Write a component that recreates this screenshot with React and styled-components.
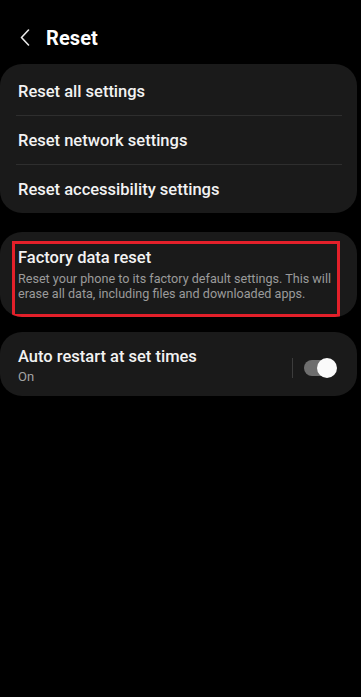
import React from "react";
import styled, { createGlobalStyle } from "styled-components";

const Global = createGlobalStyle`
  html, body { margin: 0; padding: 0; background: #000; }
  body { font-family: Roboto, "Noto Sans", "Liberation Sans", sans-serif; color: #fff; }
  * { box-sizing: border-box; }
`;

const Page = styled.div`
  width: 361px;
  min-height: 697px;
  background: #000;
  display: flex;
  flex-direction: column;
`;

const Header = styled.header`
  height: 64px;
  display: flex;
  align-items: center;
  padding: 12px 0 0 18px;
  gap: 14px;
`;

const Back = styled.button`
  background: none;
  border: none;
  padding: 0;
  width: 14px;
  height: 18px;
  display: flex;
  align-items: center;
  justify-content: center;
  margin-top: -1px;
`;

const Title = styled.h1`
  margin: 0;
  font-size: 20px;
  font-weight: 700;
  color: #fff;
  letter-spacing: 0.1px;
  margin-top: -1px;
`;

const Cards = styled.div`
  display: flex;
  flex-direction: column;
  padding-right: 4px;
`;

const Card = styled.section`
  background: #1a1a1a;
  border-radius: 22px;
  padding: ${(p) => p.$pad || "0"};
  margin-top: ${(p) => p.$mt || "0"};
  overflow: hidden;
`;

const Row = styled.div`
  height: 48px;
  display: flex;
  align-items: center;
  padding: 0 18px;
  font-size: 16.5px;
  font-weight: 500;
  color: #f2f2f2;
`;

const Divider = styled.div`
  height: 1px;
  background: #2e2e2e;
  margin: 0 15px 0 16px;
`;

const Highlight = styled.div`
  border: 3px solid #e3202a;
  padding: 4px 6px 13px 3px;
  margin-right: 17px;
`;

const ItemTitle = styled.div`
  font-size: 16.5px;
  font-weight: 500;
  line-height: 20px;
  color: #f2f2f2;
`;

const Sub = styled.div`
  font-size: 12.6px;
  line-height: 15px;
  color: #9b9b9b;
  margin-top: ${(p) => p.$mt || "0"};
`;

const SwitchRow = styled.div`
  display: flex;
  align-items: center;
  padding: 15px 21px 11px 18px;
`;

const SwitchText = styled.div`
  flex: 1;
  display: flex;
  flex-direction: column;
`;

const OnText = styled.div`
  font-size: 13px;
  line-height: 16px;
  color: #a3a3a3;
  margin-top: 2px;
`;

const VLine = styled.div`
  width: 1px;
  height: 20px;
  background: #3c3c3c;
  margin-right: 11px;
  margin-top: 4px;
`;

const Track = styled.div`
  position: relative;
  width: 32px;
  height: 16px;
  border-radius: 8px;
  background: #6e6e6e;
  margin-top: 4px;
`;

const Thumb = styled.div`
  position: absolute;
  right: -1px;
  top: -2px;
  width: 20px;
  height: 20px;
  border-radius: 50%;
  background: #fafafa;
`;

export default function App() {
  return (
    <>
      <Global />
      <Page>
        <Header>
          <Back aria-label="Back">
            <svg width="10" height="17" viewBox="0 0 10 17" fill="none">
              <path d="M8.5 1 L1.5 8.5 L8.5 16" stroke="#e8e8e8" strokeWidth="1.6" strokeLinecap="round" strokeLinejoin="round" />
            </svg>
          </Back>
          <Title>Reset</Title>
        </Header>
        <Cards>
          <Card $pad="3px 0 0 0">
            <Row>Reset all settings</Row>
            <Divider />
            <Row>Reset network settings</Row>
            <Divider />
            <Row>Reset accessibility settings</Row>
          </Card>
          <Card $pad="9px 0 0 12px" $mt="19px">
            <Highlight>
              <ItemTitle>Factory data reset</ItemTitle>
              <Sub $mt="3px">Reset your phone to its factory default settings. This will erase all data, including files and downloaded apps.</Sub>
            </Highlight>
          </Card>
          <Card $mt="15px">
            <SwitchRow>
              <SwitchText>
                <ItemTitle>Auto restart at set times</ItemTitle>
                <OnText>On</OnText>
              </SwitchText>
              <VLine />
              <Track>
                <Thumb />
              </Track>
            </SwitchRow>
          </Card>
        </Cards>
      </Page>
    </>
  );
}
